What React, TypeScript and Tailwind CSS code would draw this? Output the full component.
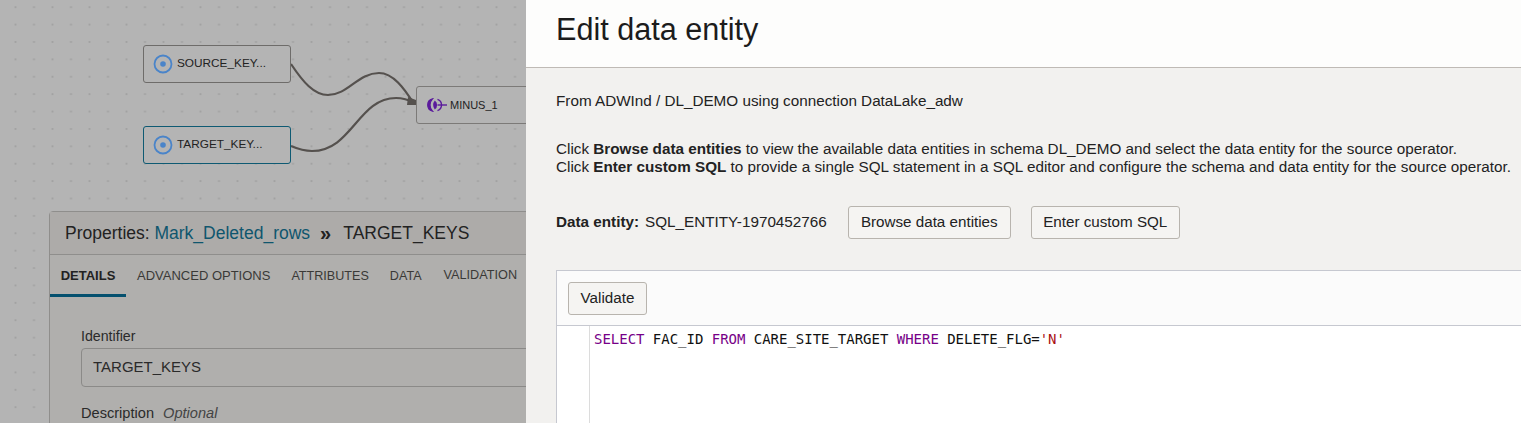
import clsx from 'clsx';

const sans = "font-['Liberation_Sans',Arial,sans-serif]";

function SourceIcon() {
  return (
    <svg width="20" height="20" viewBox="0 0 20 20" className="shrink-0">
      <circle cx="10" cy="10" r="8.5" fill="none" stroke="#4a84c9" strokeWidth="1.8" />
      <circle cx="10" cy="10" r="2.8" fill="#4a84c9" />
    </svg>
  );
}

function MinusIcon() {
  return (
    <svg width="21" height="14" viewBox="0 0 21 14" className="shrink-0">
      <path d="M6.5 0.8 A6.4 6.4 0 0 0 6.5 13.2 A9 9 0 0 1 6.5 0.8 Z" fill="#5b1a9c" stroke="#5b1a9c" strokeWidth="1.2" />
      <path d="M8.8 2.5 A5.5 5.5 0 0 1 8.8 11.5 A7 7 0 0 1 8.8 2.5 Z" fill="#5b1a9c" />
      <path d="M11.5 1.4 A6 6 0 0 1 15.5 7 A6 6 0 0 1 11.5 12.6" fill="none" stroke="#5b1a9c" strokeWidth="1.4" />
      <path d="M11.5 7 H21" stroke="#5b1a9c" strokeWidth="1.4" />
    </svg>
  );
}

function Node({ label, className, selected }: { label: string; className: string; selected?: boolean }) {
  return (
    <div
      className={clsx(
        'absolute w-[148px] h-[38px] flex items-center gap-[4px] pl-[9px] rounded-[3px] border bg-[#b4b4b4] text-[11.8px] text-[#222]',
        selected ? 'border-[#0e5a73] border-[1.5px]' : 'border-[#6e6c6a]',
        className,
      )}
    >
      <SourceIcon />
      <span>{label}</span>
    </div>
  );
}

function Tab({ label, active, className }: { label: string; active?: boolean; className?: string }) {
  return (
    <div
      className={clsx(
        'h-[42px] flex items-center whitespace-nowrap',
        active
          ? 'w-[76px] justify-center font-bold text-[#222] border-b-[3px] border-[#04506e] pt-[3px]'
          : 'text-[#3a3937]',
        className,
      )}
    >
      {label}
    </div>
  );
}

function PropertiesPanel() {
  return (
    <div className="absolute left-[49px] top-[211px] w-[490px] h-[230px] rounded-tl-[4px] border border-[#8f8e8c] bg-[#b0afad]">
      <div className="h-[43px] flex items-center pl-[15px] bg-[#adaba9] border-b border-[#8f8e8c] text-[17.5px] text-[#222]">
        <span>Properties:&nbsp;</span>
        <span className="text-[#0f566e]">Mark_Deleted_rows</span>
        <span className="ml-[10px] mr-[12px] text-[20px] font-bold leading-none">»</span>
        <span>TARGET_KEYS</span>
      </div>
      <div className="flex">
        <Tab label="DETAILS" active className="text-[13px]" />
        <Tab label="ADVANCED OPTIONS" className="ml-[11px] text-[13px]" />
        <Tab label="ATTRIBUTES" className="ml-[21px] text-[12.6px]" />
        <Tab label="DATA" className="ml-[21px] text-[12.6px]" />
        <Tab label="VALIDATION" className="ml-[22px] text-[12.7px]" />
      </div>
      <div className="pl-[31px] pt-[31px]">
        <div className="text-[14.2px] leading-[16px] text-[#2a2a2a]">Identifier</div>
        <div className="mt-[4px] h-[39px] flex items-center pl-[11px] rounded-[4px] border border-[#8b8a88] text-[15px] text-[#2a2a2a]">
          TARGET_KEYS
        </div>
        <div className="mt-[18px] text-[14.6px] leading-[16px] text-[#2a2a2a]">
          Description <span className="ml-[5px] italic text-[#444]">Optional</span>
        </div>
      </div>
    </div>
  );
}

function Canvas() {
  return (
    <div className="relative w-[526px] h-[423px] shrink-0 overflow-hidden bg-[#b4b4b4] bg-[radial-gradient(circle,#a2a2a2_0.8px,transparent_1.3px)] bg-[length:18.5px_17.4px] bg-[position:6.25px_-1.5px]">
      <svg width="526" height="200" className="absolute left-0 top-0">
        <path d="M291 64 C 303 82, 314 95, 328 95 C 348 95, 358 73, 379 73 C 393 73, 404 88, 414 104" fill="none" stroke="#55514e" strokeWidth="2.2" />
        <path d="M291 146 C 298 149, 305 151, 312 151 C 352 151, 358 98, 396 98 C 403 98, 409 100, 415 103" fill="none" stroke="#55514e" strokeWidth="2.2" />
        <path d="M408 97 L416 100 L416 105 L407 105 Z" fill="#55514e" />
      </svg>
      <Node label="SOURCE_KEY..." className="left-[143px] top-[45px]" />
      <Node label="TARGET_KEY..." className="left-[143px] top-[126px]" selected />
      <div className="absolute left-[416px] top-[86px] w-[130px] h-[38px] flex items-center gap-[3px] pl-[9px] rounded-[3px] border border-[#7c7a78] bg-[#b4b4b4] text-[11px] text-[#222]">
        <MinusIcon />
        <span>MINUS_1</span>
      </div>
      <PropertiesPanel />
    </div>
  );
}

function Button({ label, className }: { label: string; className?: string }) {
  return (
    <div
      className={clsx(
        'h-[33px] flex items-center justify-center rounded-[3px] border border-[#b8b4ae] bg-[#f5f4f2] text-[15.2px] text-[#222]',
        className,
      )}
    >
      {label}
    </div>
  );
}

function Editor() {
  return (
    <div className="mt-[31px] ml-[30px] flex-1 flex flex-col bg-white border-l border-t border-[#c6c8d0]">
      <div className="h-[55px] shrink-0 flex items-center pl-[11px] bg-[#fbfbfb] border-b border-[#c6c8d0]">
        <Button label="Validate" className="w-[79px]" />
      </div>
      <div className="flex-1 flex">
        <div className="w-[33px] shrink-0 border-r border-[#dcdcdc]" />
        <pre className="pl-[4px] pt-[3px] font-['DejaVu_Sans_Mono',monospace] text-[14px] leading-[20px] tracking-[-0.02px] text-[#111]">
          <span className="text-[#770088]">SELECT</span> FAC_ID <span className="text-[#770088]">FROM</span> CARE_SITE_TARGET{' '}
          <span className="text-[#770088]">WHERE</span> DELETE_FLG=<span className="text-[#aa1111]">'N'</span>
        </pre>
      </div>
    </div>
  );
}

export default function App() {
  return (
    <div className={clsx('w-[1521px] h-[423px] flex overflow-hidden', sans)}>
      <Canvas />
      <div className="relative flex-1 flex flex-col bg-[#f2f1ef]">
        <div className="h-[68px] shrink-0 flex items-center pl-[30px] pb-[8px] bg-[#fdfdfc] border-b border-[#bfbab5] text-[30.6px] text-[#1c1c1c]">
          Edit data entity
        </div>
        <div className="pl-[30px] pt-[24px] text-[15.26px] leading-[18px] text-[#222]">From ADWInd / DL_DEMO using connection DataLake_adw</div>
        <div className="pl-[30px] pt-[30px] text-[15.26px] leading-[18px] text-[#222] whitespace-nowrap">
          <div>
            Click <b>Browse data entities</b> to view the available data entities in schema DL_DEMO and select the data entity for the source operator.
          </div>
          <div>
            Click <b>Enter custom SQL</b> to provide a single SQL statement in a SQL editor and configure the schema and data entity for the source operator.
          </div>
        </div>
        <div className="pl-[30px] pt-[30px] flex items-center text-[15.26px] text-[#222]">
          <b>Data entity:</b>
          <span className="ml-[6px]">SQL_ENTITY-1970452766</span>
          <Button label="Browse data entities" className="ml-[21px] w-[163px]" />
          <Button label="Enter custom SQL" className="ml-[20px] w-[149px]" />
        </div>
        <Editor />
      </div>
    </div>
  );
}
